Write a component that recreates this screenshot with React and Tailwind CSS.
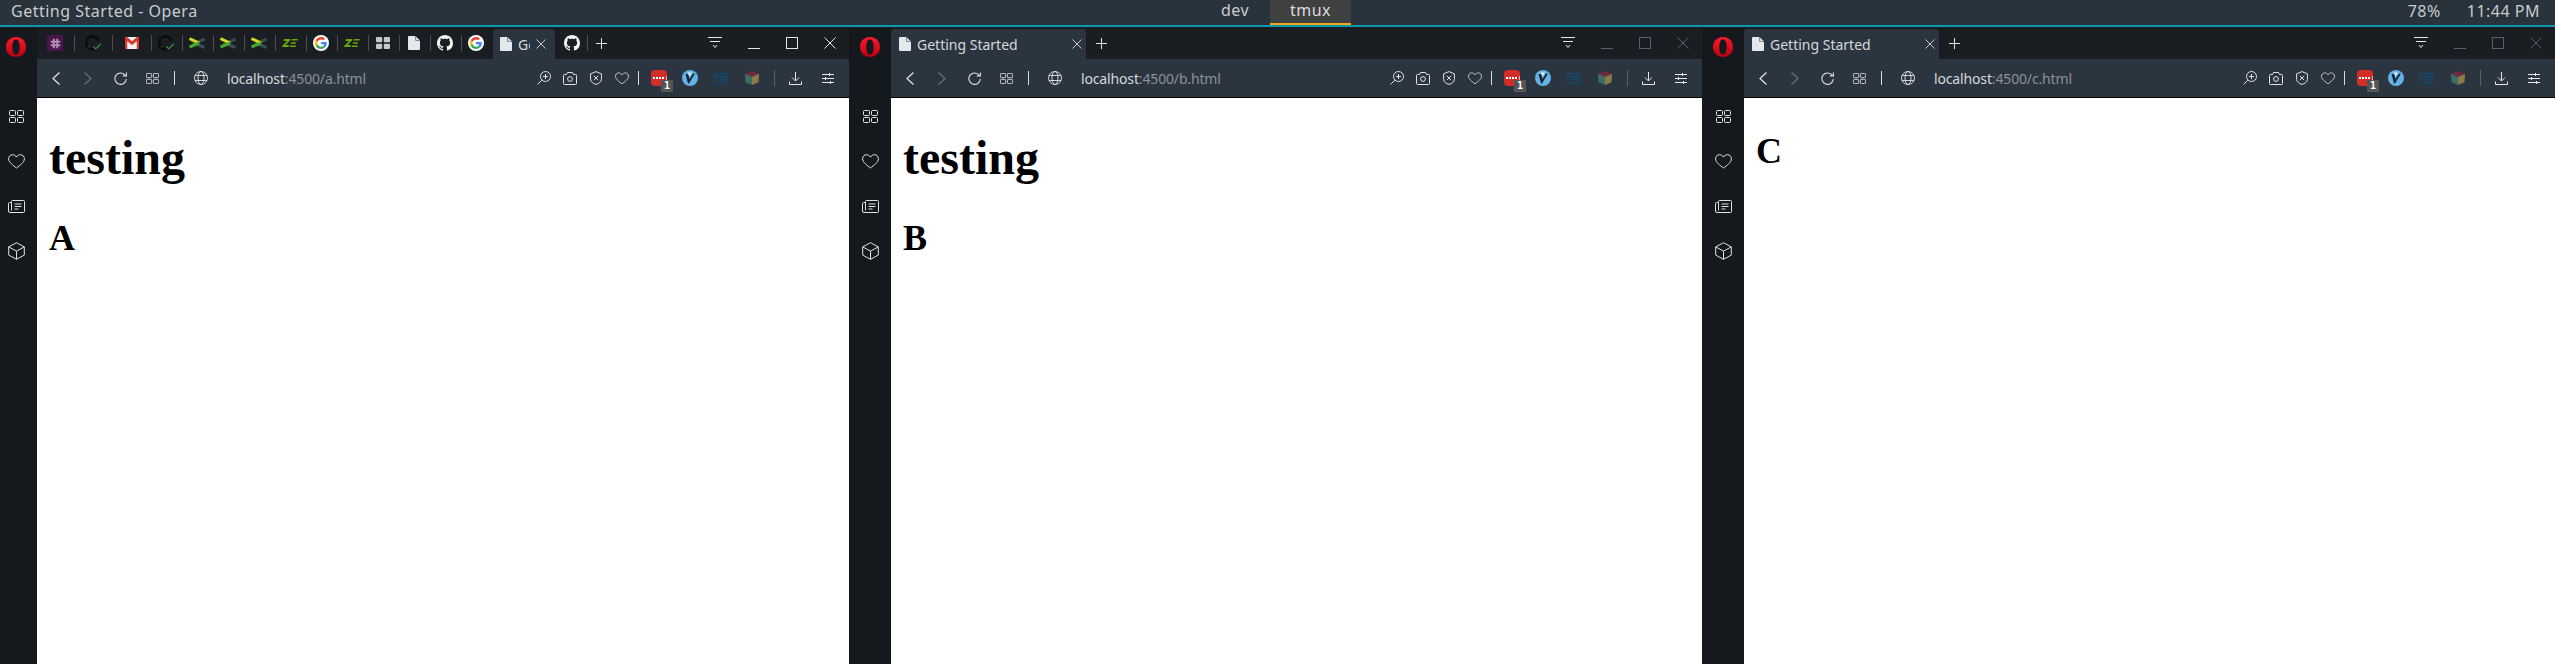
const ui = { fontFamily: '"Noto Sans", sans-serif' };
const line = "#dfe3e7";

const Opera = () => (
  <svg width="20" height="20" viewBox="0 0 20 20">
    <defs>
      <linearGradient id="operaRed" x1="0" y1="0" x2="0" y2="1">
        <stop offset="0" stopColor="#ff1b2d" />
        <stop offset="1" stopColor="#b5000f" />
      </linearGradient>
    </defs>
    <path fill="url(#operaRed)" fillRule="evenodd" d="M10 0C4.200 0 0 4.300 0 10s4.200 10 10 10 10-4.300 10-10S15.800 0 10 0zm0 2.300c2.300 0 3.700 3.400 3.700 7.700s-1.400 7.700-3.700 7.700-3.700-3.400-3.700-7.700 1.400-7.700 3.700-7.700z" />
  </svg>
);

const Grid = ({ w = 15, h = 13 }) => (
  <svg width={w} height={h} viewBox="0 0 15 13" fill="none" stroke={line} strokeWidth="1" preserveAspectRatio="none">
    <rect x="0.500" y="0.500" width="6" height="5" rx="1" />
    <rect x="8.500" y="0.500" width="6" height="5" rx="1" />
    <rect x="0.500" y="7.500" width="6" height="5" rx="1" />
    <rect x="8.500" y="7.500" width="6" height="5" rx="1" />
  </svg>
);

const Heart = ({ w = 17, h = 15 }) => (
  <svg width={w} height={h} viewBox="0 0 17 15" fill="none" stroke={line}>
    <path d="M8.500 14C5 11.300.6 8.300.6 4.800.6 2.400 2.400.7 4.500.7c1.700 0 3.100.9 4 2.400.9-1.500 2.300-2.400 4-2.400 2.100 0 3.900 1.700 3.900 4.100 0 3.500-4.400 6.500-7.900 9.200z" />
  </svg>
);

const News = () => (
  <svg width="17" height="13" viewBox="0 0 17 13" fill="none" stroke={line}>
    <path d="M3.500 2.500V1.500a1 1 0 0 1 1-1h11a1 1 0 0 1 1 1v10a1 1 0 0 1-1 1H2a1.500 1.500 0 0 1-1.500-1.500V3.500a1 1 0 0 1 1-1h2v8" />
    <path d="M6.500 4h7M6.500 6.500h7M6.500 9h4" />
  </svg>
);

const Cube = () => (
  <svg width="17" height="18" viewBox="0 0 17 18" fill="none" stroke={line} strokeLinejoin="round">
    <path d="M8.500.7l7.800 4.200v8.200l-7.800 4.200L.7 13.100V4.900z" />
    <path d="M.7 4.900l7.800 4.200 7.800-4.200M8.500 9.100v8.200" />
  </svg>
);

const Chevron = ({ left, color }) => (
  <svg width="8" height="13" viewBox="0 0 8 13" fill="none" stroke={color} strokeWidth="1.200">
    <path d={left ? "M7.500.5L1 6.500l6.500 6" : "M.5.500L7 6.500l-6.500 6"} />
  </svg>
);

const Reload = () => (
  <svg width="13" height="13" viewBox="0 0 13 13" fill="none" stroke={line} strokeWidth="1.100">
    <path d="M11.300 3.400A5.700 5.700 0 1 0 12.300 7" />
    <path d="M12.400.4v3.500H8.900" />
  </svg>
);

const Globe = () => (
  <svg width="14" height="14" viewBox="0 0 14 14" fill="none" stroke={line} strokeWidth="0.900">
    <circle cx="7" cy="7" r="6.500" />
    <ellipse cx="7" cy="7" rx="3" ry="6.500" />
    <path d="M1 4.500h12M1 9.500h12" />
  </svg>
);

const Filter = () => (
  <svg width="14" height="12" viewBox="0 0 14 12" fill="none" stroke="#e4e8ec">
    <path d="M0 .5h14M2 4.500h10M5 8l2 2.500L9 8" />
  </svg>
);

const Close = ({ size = 12, color = "#e4e8ec" }) => (
  <svg width={size} height={size} viewBox="0 0 12 12" fill="none" stroke={color}>
    <path d="M.5.500l11 11M11.500.500l-11 11" />
  </svg>
);

const Plus = () => (
  <svg width="11" height="11" viewBox="0 0 11 11" stroke="#e4e8ec" className="shrink-0">
    <path d="M5.500 0v11M0 5.500h11" />
  </svg>
);

const PageIcon = () => (
  <svg width="12" height="14" viewBox="0 0 12 14" className="shrink-0">
    <path fill="#e4e8ec" d="M1 0h6.500L12 4.500V13a1 1 0 0 1-1 1H1a1 1 0 0 1-1-1V1a1 1 0 0 1 1-1z" />
    <path fill="#2b353f" d="M7.500 0v4.800H12v-.6H8.100V0z" />
  </svg>
);

const Github = () => (
  <svg width="16" height="16" viewBox="0 0 16 16" fill="#f2f3f4" className="shrink-0">
    <path d="M8 0C3.580 0 0 3.580 0 8c0 3.540 2.290 6.530 5.470 7.590.4.070.55-.17.55-.38 0-.19-.01-.82-.01-1.490-2.010.37-2.530-.49-2.690-.94-.09-.23-.48-.94-.82-1.130-.28-.15-.68-.52-.01-.53.63-.01 1.080.58 1.230.82.720 1.210 1.870.870 2.330.660.070-.520.280-.870.510-1.070-1.780-.200-3.640-.890-3.640-3.950 0-.870.310-1.590.820-2.150-.080-.200-.360-1.020.080-2.120 0 0 .670-.210 2.200.820.640-.180 1.320-.270 2-.270s1.360.090 2 .270c1.530-1.040 2.200-.820 2.200-.820.440 1.100.160 1.920.080 2.120.510.560.820 1.270.820 2.150 0 3.070-1.870 3.750-3.650 3.950.290.250.540.730.540 1.480 0 1.070-.010 1.930-.010 2.200 0 .210.150.460.550.380A8.010 8.010 0 0 0 16 8c0-4.420-3.580-8-8-8z" />
  </svg>
);

const Google = () => (
  <div className="w-4 h-4 rounded-full bg-white flex items-center justify-center">
    <svg width="12" height="12" viewBox="0 0 48 48">
      <path fill="#EA4335" d="M24 9.500c3.500 0 6.700 1.200 9.200 3.600l6.900-6.900C35.900 2.400 30.500 0 24 0 14.600 0 6.500 5.400 2.600 13.200l8 6.200C12.500 13.700 17.800 9.500 24 9.500z" />
      <path fill="#4285F4" d="M47 24.500c0-1.600-.1-3.100-.4-4.500H24v9h13c-.6 3-2.300 5.500-4.800 7.200l7.700 6c4.500-4.200 7.100-10.300 7.100-17.700z" />
      <path fill="#FBBC05" d="M10.500 28.600A14.500 14.500 0 0 1 10.500 19.400l-8-6.200A24 24 0 0 0 2.600 34.800z" />
      <path fill="#34A853" d="M24 48c6.500 0 11.900-2.100 15.900-5.800l-7.700-6c-2.200 1.400-4.900 2.300-8.200 2.300-6.200 0-11.500-4.200-13.400-9.900l-8 6.200C6.500 42.600 14.600 48 24 48z" />
    </svg>
  </div>
);

const Slack = () => (
  <div className="w-4 h-4 bg-[#4a154b] flex items-center justify-center">
    <svg width="11" height="11" viewBox="0 0 11 11" stroke="#ab8fac" strokeWidth="2" strokeLinecap="round">
      <path d="M3.800 1.500v8M7.200 1.500v8M1.500 3.800h8M1.500 7.200h8" />
    </svg>
  </div>
);

const Gmail = () => (
  <svg width="14" height="12" viewBox="0 0 14 12">
    <rect width="14" height="12" fill="#f0f0f0" />
    <path d="M0 0h2L7 4.200 12 0h2v12h-2.200V4.200L7 8 2.200 4.200V12H0z" fill="#d8392b" />
  </svg>
);

const CheckCircle = () => (
  <svg width="16" height="16" viewBox="0 0 16 16" fill="none">
    <path d="M12 12.500A6.500 6.500 0 1 1 13.800 6" stroke="#0a0c0e" strokeWidth="2.600" />
    <path d="M2.500 11.700h2.500" stroke="#4a4f55" strokeWidth="0.800" />
    <path d="M8.500 11.500l2.200 2.400 5-5" stroke="#2c9a40" strokeWidth="1.200" />
  </svg>
);

const Layers = () => (
  <svg width="16" height="12" viewBox="0 0 16 12" fill="none" strokeWidth="3">
    <path d="M15.500 2L6 6.500l9.500 4" stroke="#34504f" />
    <path d="M.5 1.500L10 6" stroke="#d6d91c" />
    <path d="M10 6L.5 10" stroke="#46a92e" />
  </svg>
);

const Ze = () => (
  <svg width="16" height="8" viewBox="0 0 16 8" fill="#66a80c">
    <path d="M2 0h6.500L8 1.500 3.500 6H7L6.500 8H0l.5-1.500L5 2H1.500zM10 0h6l-.5 1.500h-6zM9 3.200h5l-.4 1.500h-5zM8 6.500h6L13.600 8h-6z" />
  </svg>
);

const AppsFilled = () => (
  <svg width="14" height="12" viewBox="0 0 14 12" fill="#c6c9cc">
    <rect width="6.200" height="5.300" rx="1" />
    <rect x="7.800" width="6.200" height="5.300" rx="1" />
    <rect y="6.700" width="6.200" height="5.300" rx="1" />
    <rect x="7.800" y="6.700" width="6.200" height="5.300" rx="1" />
  </svg>
);

const LensPlus = () => (
  <svg width="14" height="14" viewBox="0 0 14 14" fill="none" stroke={line}>
    <circle cx="8.500" cy="5.500" r="5" />
    <path d="M8.500 3v5M6 5.500h5M4.800 9.200L.6 13.400" />
  </svg>
);

const Camera = () => (
  <svg width="14" height="13" viewBox="0 0 14 13" fill="none" stroke={line}>
    <path d="M1.500 2.500h2L4.500.5h5l1 2h2a1 1 0 0 1 1 1v8a1 1 0 0 1-1 1h-11a1 1 0 0 1-1-1v-8a1 1 0 0 1 1-1z" />
    <circle cx="7" cy="7" r="2.400" />
  </svg>
);

const Shield = () => (
  <svg width="12" height="14" viewBox="0 0 12 14" fill="none" stroke={line}>
    <path d="M6 .6l5.400 2.200v5.700c0 2.400-2.900 4.300-5.400 4.900C3.500 12.800.6 10.900.6 8.500V2.800z" />
    <path d="M3.800 4.800l4.400 4.400M8.200 4.800L3.800 9.200" />
  </svg>
);

const Lastpass = () => (
  <div className="relative w-4 h-4 bg-[#d32d27] rounded-sm flex items-center pl-[2px] gap-px">
    <span className="w-0.5 h-0.5 bg-white" />
    <span className="w-0.5 h-0.5 bg-white" />
    <span className="w-0.5 h-0.5 bg-white" />
    <span className="w-0.5 h-0.5 bg-white" />
    <span className="w-px h-1 bg-[#f0a5a2] ml-px" />
    <span className="absolute left-[10px] top-[10px] w-3 h-3 bg-[#555] text-white text-[10px] leading-3 font-bold text-center" style={{ fontFamily: '"DejaVu Sans Mono", monospace' }}>1</span>
  </div>
);

const Vim = () => (
  <svg width="16" height="16" viewBox="0 0 16 16">
    <circle cx="8" cy="8" r="8" fill="#63b3e8" />
    <path d="M3.500 4h2.700l1.300 5L11 3.500h2L7 13.500H6z" fill="#16252f" />
    <path d="M5.800 2.500h4L7.500 6.500z" fill="#e6f2fa" />
  </svg>
);

const Panel = () => (
  <svg width="13" height="11" viewBox="0 0 13 11" fill="none" stroke="#14486e" strokeWidth="1.300">
    <rect x="0.700" y="0.700" width="11.600" height="9.600" />
    <path d="M.7 3.500h11.600M6.500 3.500v6.800M6.500 6.500h5.800" />
  </svg>
);

const ColorCube = () => (
  <svg width="14" height="14" viewBox="0 0 14 14">
    <path fill="#6e2b3e" d="M7 0l7 2.800L7 6 0 2.800z" />
    <path fill="#3a6f66" d="M0 2.800L7 6v8l-6.500-2.800z" />
    <path fill="#8a7b4a" d="M14 2.800L7 6v8l6.500-2.800z" />
  </svg>
);

const Download = () => (
  <svg width="13" height="13" viewBox="0 0 13 13" fill="none" stroke="#e4e8ec">
    <path d="M6.500 0v8.500M3 5.500l3.500 3.500L10 5.500M.5 9.500v3h12v-3" />
  </svg>
);

const Sliders = () => (
  <svg width="12" height="11" viewBox="0 0 12 11" stroke="#e4e8ec">
    <path d="M0 1.500h12M0 5.500h12M0 9.500h12" />
    <path d="M7.500 0v3M3.500 4v3M8.500 8v3" />
  </svg>
);

const pinned = [
  { icon: <Slack />, sep: "ml-[11px] mr-[10px]" },
  { icon: <CheckCircle />, sep: "ml-[11px] mr-[11px]" },
  { icon: <Gmail />, sep: "ml-[11px] mr-[6px]" },
  { icon: <CheckCircle />, sep: "ml-2 mr-[6px]" },
  { icon: <Layers />, sep: "ml-2 mr-[6px]" },
  { icon: <Layers />, sep: "ml-2 mr-[6px]" },
  { icon: <Layers />, sep: "ml-2 mr-[6px]" },
  { icon: <Ze />, sep: "ml-2 mr-[6px]" },
  { icon: <Google />, sep: "ml-2 mr-[6px]" },
  { icon: <Ze />, sep: "ml-2 mr-[6px]" },
  { icon: <AppsFilled />, sep: "ml-2 mr-[6px]" },
  { icon: <PageIcon />, sep: "ml-2 mr-[6px]" },
  { icon: <Github />, sep: "ml-2 mr-[6px]" },
];

const Tab = ({ narrow }) => (
  <div className={`flex items-center h-[30px] mt-0.5 bg-[#2b353f] rounded-t shrink-0 ${narrow ? "w-[62px] pl-[7px]" : "w-[195px] pl-2"}`}>
    <PageIcon />
    <span className={`ml-[6px] text-[14px] text-[#d5d9dd] overflow-hidden whitespace-nowrap ${narrow ? "w-[12px]" : "w-[149px]"}`}>Getting Started</span>
    <span className="ml-[6px] shrink-0"><Close size={10} /></span>
  </div>
);

const Browser = ({ address, heading, sub, inactive, first, tabs }) => {
  const ctl = inactive ? "#5a6066" : "#e4e8ec";
  return (
    <div className={`flex shrink-0 h-[637px] ${first ? "w-[854px] -ml-[5px]" : "w-[853px]"}`}>
      <aside className="w-[42px] bg-[#15191e] flex flex-col items-center shrink-0">
        <div className="h-10 flex items-center"><Opera /></div>
        <div className="mt-[27px] flex flex-col items-center">
          <div className="h-[45px] flex items-center"><Grid /></div>
          <div className="h-[45px] flex items-center"><Heart /></div>
          <div className="h-[45px] flex items-center"><News /></div>
          <div className="h-[44px] flex items-center"><Cube /></div>
        </div>
      </aside>
      <div className="flex-1 flex flex-col min-w-0">
        <div className="h-8 bg-[#1a1d22] flex items-center">
          {tabs}
          <div className="flex-1" />
          <Filter />
          <svg width="12" height="12" viewBox="0 0 12 12" stroke={ctl} className="ml-[26px]"><path d="M0 11.500h12" /></svg>
          <svg width="12" height="12" viewBox="0 0 12 12" fill="none" stroke={ctl} className="ml-[26px]"><rect x="0.500" y="0.500" width="11" height="11" /></svg>
          <span className="ml-[26px] mr-[13px]"><Close color={ctl} /></span>
        </div>
        <div className="h-[38px] bg-[#2b353f] flex items-center pl-[15px] pr-[15px]">
          <Chevron left color="#e4e8ec" />
          <span className="ml-6"><Chevron color="#6a7178" /></span>
          <span className="ml-[22px]"><Reload /></span>
          <span className="ml-[19px]"><Grid w={13} h={11} /></span>
          <span className="ml-[15px] w-px h-[14px] bg-[#d8dde2]" />
          <span className="ml-[19px]"><Globe /></span>
          <span className="ml-[19px] text-[14px] tracking-[-0.15px] text-[#d5d9dd]">localhost<span className="text-[#8a9199]">:4500/{address}</span></span>
          <div className="flex-1" />
          <LensPlus />
          <span className="ml-3"><Camera /></span>
          <span className="ml-[13px]"><Shield /></span>
          <span className="ml-[13px]"><Heart w={14} h={13} /></span>
          <span className="ml-[9px] w-px h-[14px] bg-[#d8dde2]" />
          <span className="ml-3"><Lastpass /></span>
          <span className="ml-[15px]"><Vim /></span>
          <span className="ml-4"><Panel /></span>
          <span className="ml-[18px]"><ColorCube /></span>
          <span className="ml-[15px] w-px h-4 bg-[#5b6168]" />
          <span className="ml-[14px]"><Download /></span>
          <span className="ml-5"><Sliders /></span>
        </div>
        <main className="flex-1 bg-white border-t border-black text-black font-bold pl-3" style={{ fontFamily: '"Liberation Serif", serif' }}>
          {heading && <h1 className="text-[48px] leading-[55px] mt-[32px]">{heading}</h1>}
          <h2 className="text-[36px] leading-[41px] mt-[33px]">{sub}</h2>
        </main>
      </div>
    </div>
  );
};

export default function App() {
  return (
    <div className="w-[2555px] h-[664px] overflow-hidden bg-[#15191e]" style={ui}>
      <header className="relative h-[25px] bg-[#29333b] flex items-center pl-[11px] pr-[15px] pb-1 text-[16px] text-[#c8ccd0] tracking-[0.5px]">
        <span>Getting Started - Opera</span>
        <div className="absolute left-[1200px] top-0 flex h-[25px]">
          <span className="w-[70px] text-center leading-[21px]">dev</span>
          <span className="w-[81px] text-center leading-[21px] bg-[#3f4040] border-b-[2px] border-[#f5a31a] text-[#d8dadc]">tmux</span>
        </div>
        <div className="flex-1" />
        <span>78%</span>
        <span className="ml-[26px]">11:44 PM</span>
      </header>
      <div className="h-0.5 bg-[#0a9aae]" />
      <div className="flex">
        <Browser
          first
          address="a.html"
          heading="testing"
          sub="A"
          tabs={
            <div className="flex items-center pl-[10px] h-8 overflow-hidden">
              {pinned.map((p, i) => (
                <div key={i} className="flex items-center">
                  <div className="flex items-center justify-center w-4 h-4 shrink-0">{p.icon}</div>
                  <span className={`w-px h-4 bg-[#4b5056] shrink-0 ${p.sep}`} />
                </div>
              ))}
              <Google />
              <div className="ml-[9px] flex items-center self-start h-8"><Tab narrow /></div>
              <span className="ml-[9px]"><Github /></span>
              <span className="ml-[7px] mr-2 w-px h-4 bg-[#4b5056] shrink-0" />
              <Plus />
            </div>
          }
        />
        <Browser inactive address="b.html" heading="testing" sub="B" tabs={<><Tab /><span className="ml-[10px]"><Plus /></span></>} />
        <Browser inactive address="c.html" sub="C" tabs={<><Tab /><span className="ml-[10px]"><Plus /></span></>} />
      </div>
    </div>
  );
}
